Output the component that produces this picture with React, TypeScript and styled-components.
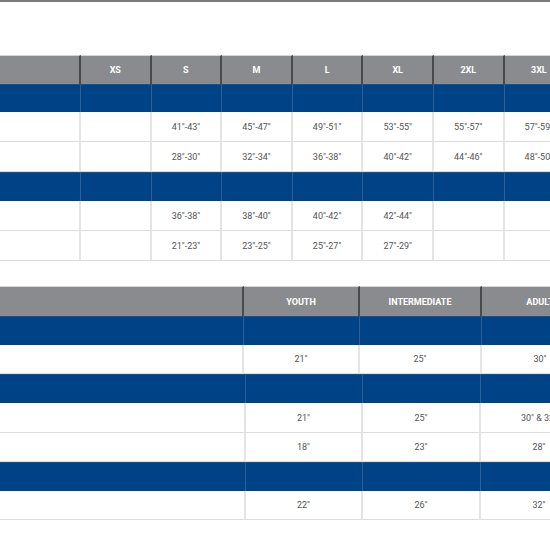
import styled, { createGlobalStyle } from "styled-components";

const GlobalStyle = createGlobalStyle`
  html, body {
    margin: 0;
    padding: 0;
    background: #ffffff;
  }
  body {
    font-family: Roboto, "Liberation Sans", Arial, sans-serif;
  }
`;

const Page = styled.div`
  width: 550px;
  height: 550px;
  overflow: hidden;
  border-top: 2px solid #7b7b7b;
  box-sizing: border-box;
  background: #ffffff;
`;

const Section = styled.div<{ $top: number }>`
  display: flex;
  flex-direction: column;
  margin-top: ${(p) => p.$top}px;
  width: 700px;
`;

const Row = styled.div<{ $cols: string; $height: number }>`
  display: grid;
  grid-template-columns: ${(p) => p.$cols};
  height: ${(p) => p.$height}px;
`;

const HeadCell = styled.div`
  display: flex;
  align-items: center;
  justify-content: center;
  background: #898b8e;
  color: #ffffff;
  font-size: 9px;
  font-weight: 700;
  border-right: 2px solid #4a4a4a;
  border-top: 1px solid #d6d6d6;
  box-sizing: border-box;
`;

const BandCell = styled.div`
  background: #004286;
  border-right: 1px solid #2f5d98;
  border-top: 1px solid #1b4f8f;
  box-sizing: border-box;
`;

const DataCell = styled.div`
  display: flex;
  align-items: center;
  justify-content: center;
  background: #ffffff;
  color: #555555;
  font-size: 9px;
  border-right: 2px solid #e4e4e4;
  border-bottom: 1px solid #dcdcdc;
  box-sizing: border-box;
  white-space: nowrap;
`;

type Line = { kind: "head" | "band" | "data"; cells?: string[]; h: number };

const Block = ({ cols, count, lines }: { cols: string; count: number; lines: Line[] }) => (
  <>
    {lines.map((line, i) => (
      <Row key={i} $cols={cols} $height={line.h}>
        {Array.from({ length: count }).map((_, j) => {
          const text = line.cells?.[j] ?? "";
          if (line.kind === "head") return <HeadCell key={j}>{text}</HeadCell>;
          if (line.kind === "band") return <BandCell key={j} />;
          return <DataCell key={j}>{text}</DataCell>;
        })}
      </Row>
    ))}
  </>
);

const shirtCols = "81px repeat(8, 70.6px)";

const shirtLines: Line[] = [
  { kind: "head", h: 29, cells: ["", "XS", "S", "M", "L", "XL", "2XL", "3XL", "4XL"] },
  { kind: "band", h: 28 },
  { kind: "data", h: 30, cells: ["", "", "41\"-43\"", "45\"-47\"", "49\"-51\"", "53\"-55\"", "55\"-57\"", "57\"-59\"", ""] },
  { kind: "data", h: 30, cells: ["", "", "28\"-30\"", "32\"-34\"", "36\"-38\"", "40\"-42\"", "44\"-46\"", "48\"-50\"", ""] },
  { kind: "band", h: 29 },
  { kind: "data", h: 30, cells: ["", "", "36\"-38\"", "38\"-40\"", "40\"-42\"", "42\"-44\"", "", "", ""] },
  { kind: "data", h: 30, cells: ["", "", "21\"-23\"", "23\"-25\"", "25\"-27\"", "27\"-29\"", "", "", ""] },
];

export default function App() {
  return (
    <>
      <GlobalStyle />
      <Page>
        <Section $top={53}>
          <Block cols={shirtCols} count={9} lines={shirtLines} />
        </Section>
        <Section $top={25}>
          <Block
            cols="244px 116px 122px 118px"
            count={4}
            lines={[
              { kind: "head", h: 30, cells: ["", "YOUTH", "INTERMEDIATE", "ADULT"] },
              { kind: "band", h: 29 },
              { kind: "data", h: 29, cells: ["", "21\"", "25\"", "30\""] },
            ]}
          />
          <Block
            cols="246px 117px 118px 118px"
            count={4}
            lines={[
              { kind: "band", h: 29 },
              { kind: "data", h: 30, cells: ["", "21\"", "25\"", "30\" & 32\""] },
              { kind: "data", h: 29, cells: ["", "18\"", "23\"", "28\""] },
              { kind: "band", h: 29 },
              { kind: "data", h: 29, cells: ["", "22\"", "26\"", "32\""] },
            ]}
          />
        </Section>
      </Page>
    </>
  );
}
